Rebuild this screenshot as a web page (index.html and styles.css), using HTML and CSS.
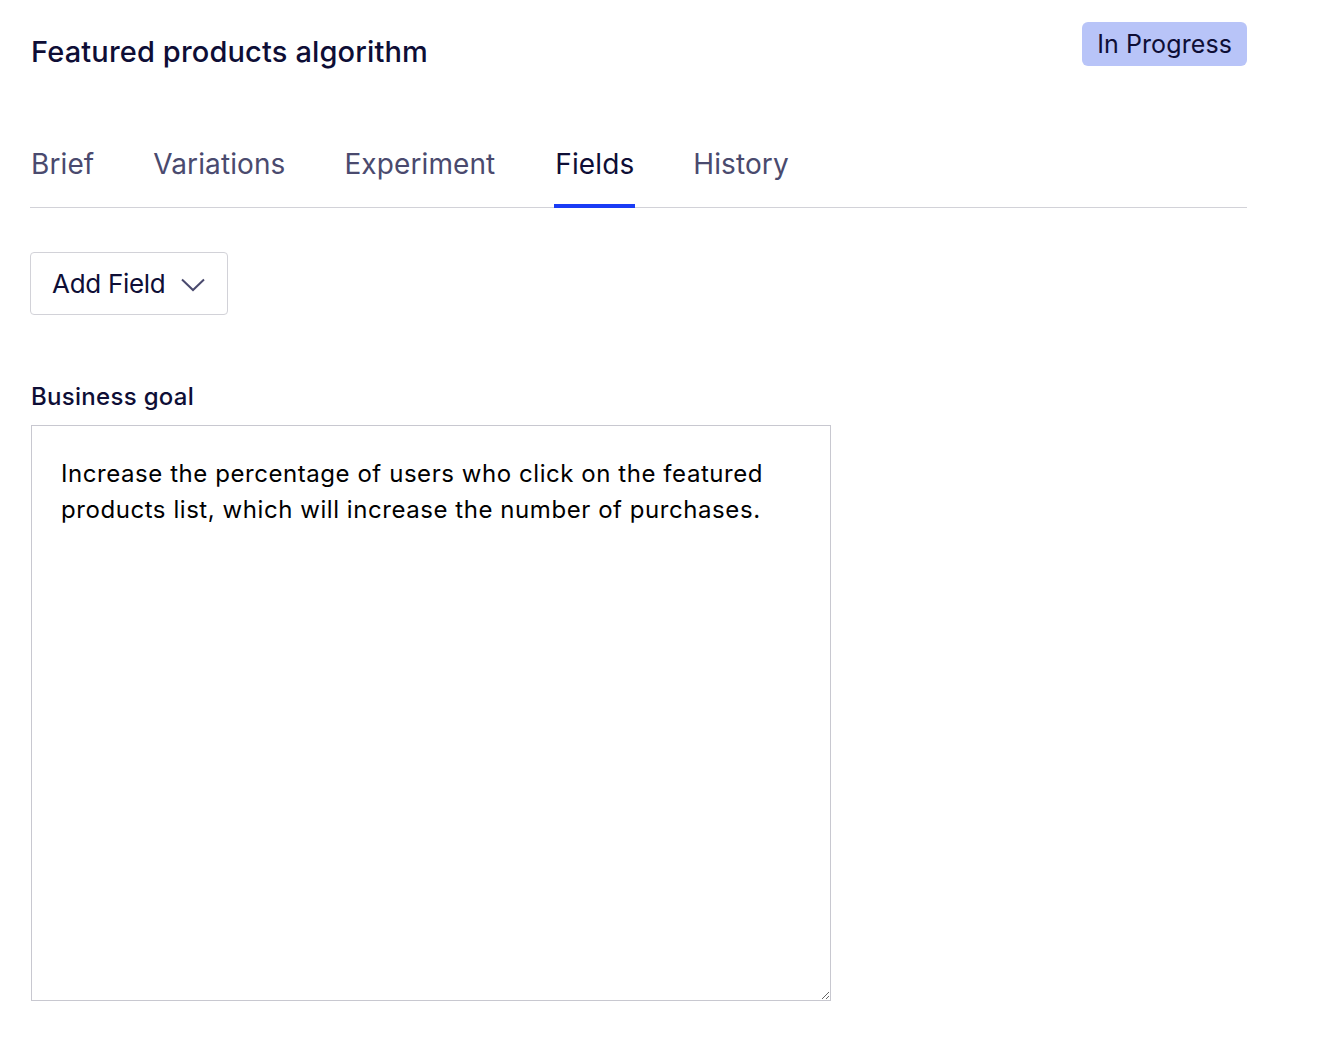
FILE: index.html
```html
<!DOCTYPE html>
<html lang="en">
<head>
<meta charset="utf-8">
<title>Featured products algorithm</title>
<link rel="stylesheet" href="styles.css">
</head>
<body>
<div class="page">
  <header class="header">
    <h1 class="title">Featured products algorithm</h1>
    <span class="badge">In Progress</span>
  </header>
  <nav class="tabs">
    <a class="tab">Brief</a>
    <a class="tab">Variations</a>
    <a class="tab">Experiment</a>
    <a class="tab active">Fields</a>
    <a class="tab">History</a>
  </nav>
  <button class="add-btn">Add Field
    <svg class="chev" width="24" height="14" viewBox="0 0 24 14"><path d="M1 1.5 L12 12 L23 1.5" fill="none" stroke="#4a4a6e" stroke-width="2"/></svg>
  </button>
  <div class="field">
    <label class="label">Business goal</label>
    <textarea class="textarea">Increase the percentage of users who click on the featured products list, which will increase the number of purchases.</textarea>
  </div>
</div>
</body>
</html>
```
FILE: styles.css
```css
* { box-sizing: border-box; }
html, body { margin: 0; padding: 0; background: #fff; }
body { font-family: Inter, "Noto Sans", sans-serif; color: #0e0e36; }
.page { width: 1247px; padding: 22px 0 0 30px; }
.header { display: flex; justify-content: space-between; align-items: flex-start; padding-left: 1px; }
.title { margin: 14px 0 0; font-size: 29px; font-weight: 500; line-height: 32px; letter-spacing: 0.15px; }
.badge { background: #b8c4f8; color: #0e0e36; font-size: 25px; line-height: 44px; padding: 0 15px; border-radius: 6px; letter-spacing: 0.1px; }
.tabs { display: flex; gap: 58px; border-bottom: 1px solid #d2d2d8; margin-top: 68px; }
.tab { font-size: 28px; line-height: 36px; color: #4a4a6e; padding: 10px 1px 22px 0; border-bottom: 4px solid transparent; margin-bottom: -1px; cursor: pointer; letter-spacing: 0.1px; }
.tab:first-child { padding-left: 1px; }
.tab.active { color: #0e0e36; border-bottom-color: #1a3cf5; padding-left: 1px; }
.add-btn { margin-top: 44px; display: flex; align-items: center; gap: 16px; height: 63px; width: 198px; padding: 0 0 0 21px; background: #fff; border: 1px solid #d2d2d8; border-radius: 4px; font-family: inherit; font-size: 26px; letter-spacing: -0.3px; color: #0e0e36; }
.chev { margin-top: 2px; }
.field { margin-top: 66px; padding-left: 1px; display: flex; flex-direction: column; }
.label { font-size: 24px; font-weight: 500; line-height: 32px; margin-bottom: 12px; letter-spacing: 0.3px; }
.textarea { width: 800px; height: 576px; border: 1px solid #c8c8d0; padding: 30px 29px 28px; font-family: inherit; font-size: 24px; line-height: 36px; letter-spacing: 0.56px; color: #000; resize: both; }
```
